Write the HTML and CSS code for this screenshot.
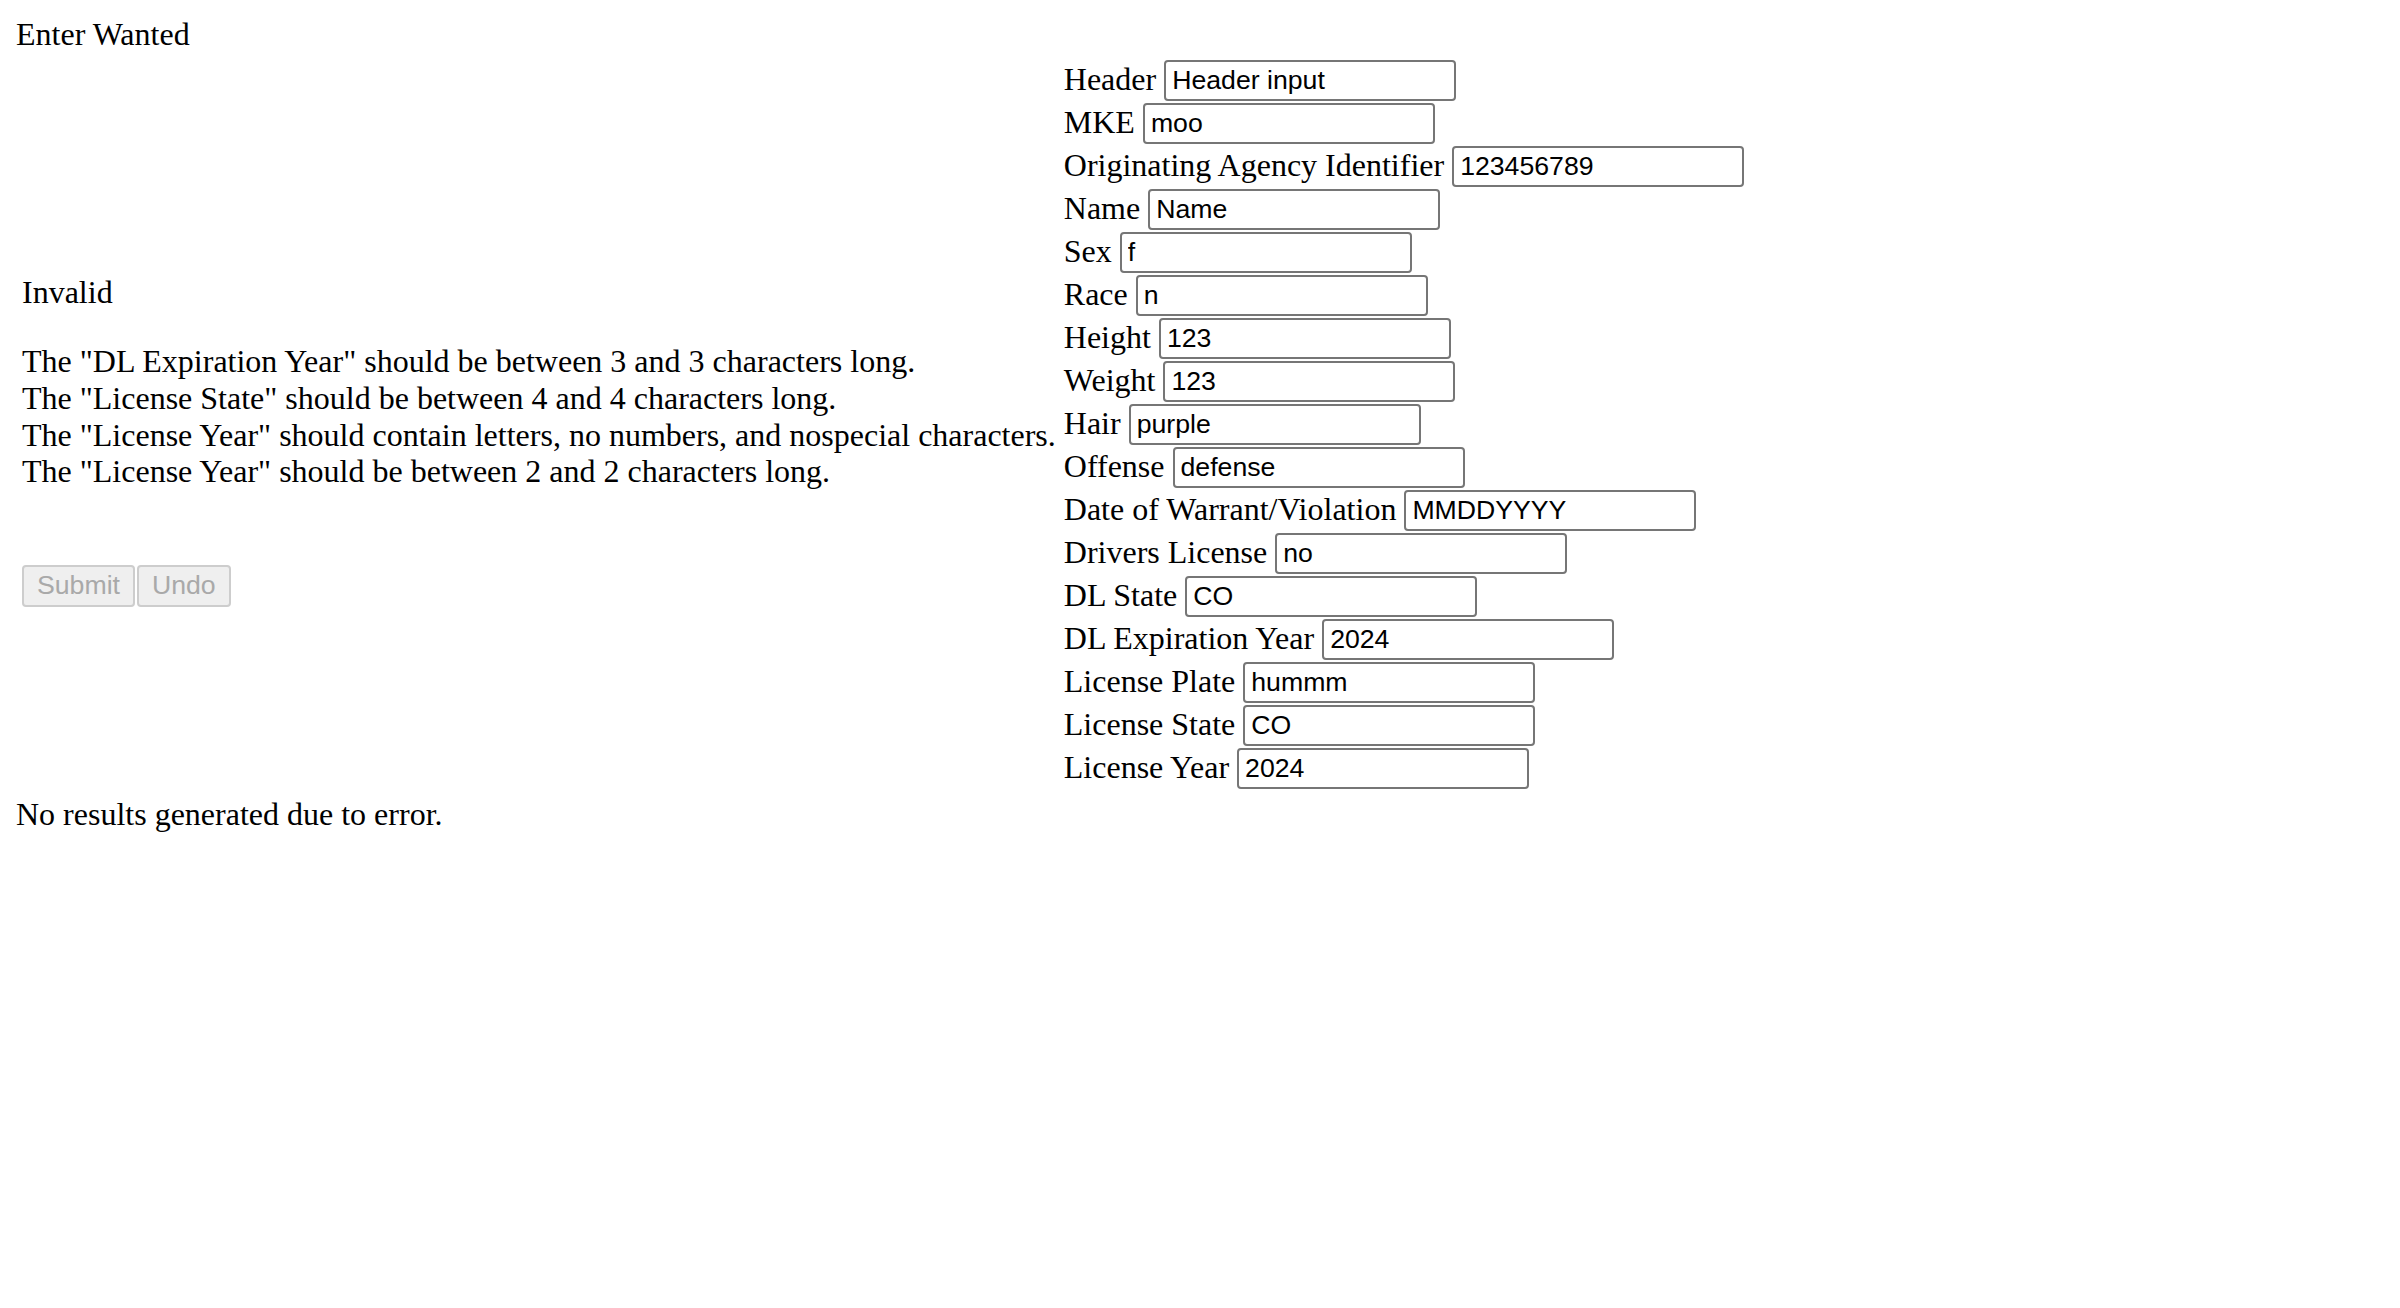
FILE: index.html
```html
<!DOCTYPE html>
<html lang="en">
<head>
<meta charset="utf-8">
<title>Enter Wanted</title>
<link rel="stylesheet" href="styles.css">
</head>
<body>
<div class="title">Enter Wanted</div>
<div class="main">
  <div class="status">
    <div class="status-head">Invalid</div>
    <div class="errors">
      <div>The "DL Expiration Year" should be between 3 and 3 characters long.</div>
      <div>The "License State" should be between 4 and 4 characters long.</div>
      <div>The "License Year" should contain letters, no numbers, and nospecial characters.</div>
      <div>The "License Year" should be between 2 and 2 characters long.</div>
    </div>
    <div class="actions">
      <button class="btn" type="button" disabled>Submit</button>
      <button class="btn" type="button" disabled>Undo</button>
    </div>
  </div>
  <form class="fields">
    <div class="row"><label class="lbl" for="f1">Header</label><input class="field" id="f1" type="text" value="Header input"></div>
    <div class="row"><label class="lbl" for="f2">MKE</label><input class="field" id="f2" type="text" value="moo"></div>
    <div class="row"><label class="lbl" for="f3">Originating Agency Identifier</label><input class="field" id="f3" type="text" value="123456789"></div>
    <div class="row"><label class="lbl" for="f4">Name</label><input class="field" id="f4" type="text" value="Name"></div>
    <div class="row"><label class="lbl" for="f5">Sex</label><input class="field" id="f5" type="text" value="f"></div>
    <div class="row"><label class="lbl" for="f6">Race</label><input class="field" id="f6" type="text" value="n"></div>
    <div class="row"><label class="lbl" for="f7">Height</label><input class="field" id="f7" type="text" value="123"></div>
    <div class="row"><label class="lbl" for="f8">Weight</label><input class="field" id="f8" type="text" value="123"></div>
    <div class="row"><label class="lbl" for="f9">Hair</label><input class="field" id="f9" type="text" value="purple"></div>
    <div class="row"><label class="lbl" for="f10">Offense</label><input class="field" id="f10" type="text" value="defense"></div>
    <div class="row"><label class="lbl" for="f11">Date of Warrant/Violation</label><input class="field" id="f11" type="text" value="MMDDYYYY"></div>
    <div class="row"><label class="lbl" for="f12">Drivers License</label><input class="field" id="f12" type="text" value="no"></div>
    <div class="row"><label class="lbl" for="f13">DL State</label><input class="field" id="f13" type="text" value="CO"></div>
    <div class="row"><label class="lbl" for="f14">DL Expiration Year</label><input class="field" id="f14" type="text" value="2024"></div>
    <div class="row"><label class="lbl" for="f15">License Plate</label><input class="field" id="f15" type="text" value="hummm"></div>
    <div class="row"><label class="lbl" for="f16">License State</label><input class="field" id="f16" type="text" value="CO"></div>
    <div class="row"><label class="lbl" for="f17">License Year</label><input class="field" id="f17" type="text" value="2024"></div>
  </form>
</div>
<div class="result">No results generated due to error.</div>
</body>
</html>
```

FILE: styles.css
```css
html {
  background: #fff;
}

body {
  margin: 16px;
  font-family: "Liberation Serif", "Times New Roman", serif;
  font-size: 32px;
  line-height: normal;
  color: #000;
}

.title {
  line-height: normal;
}

.main {
  display: flex;
  align-items: stretch;
  gap: 8px;
}

.status {
  align-self: center;
  padding: 32px 0 0 6px;
  white-space: nowrap;
}

.status-head {
  margin-bottom: 32px;
}

.errors {
  line-height: 36.7px;
}

.actions {
  display: flex;
  gap: 2px;
  margin-top: 75px;
}

.btn {
  height: 42px;
  box-sizing: border-box;
  padding: 0 13px;
  margin: 0;
  font-family: "Liberation Sans", Arial, sans-serif;
  font-size: 26.67px;
  color: #a9a9a9;
  background: #efefef;
  border: 2px solid #cdcdcd;
  border-radius: 4px;
}

.fields {
  display: flex;
  flex-direction: column;
  padding: 6px 0;
  margin: 0;
}

.row {
  display: flex;
  align-items: flex-start;
  gap: 8px;
  height: 43px;
  white-space: nowrap;
}

.lbl {
  margin-top: 2px;
}

.field {
  width: 292px;
  height: 41px;
  box-sizing: border-box;
  margin: 1px 0 0 0;
  padding: 0 6px;
  font-family: "Liberation Sans", Arial, sans-serif;
  font-size: 26.67px;
  color: #000;
  background: #fff;
  border: 2px solid #767676;
  border-radius: 4px;
}

.result {
  line-height: normal;
}
```
